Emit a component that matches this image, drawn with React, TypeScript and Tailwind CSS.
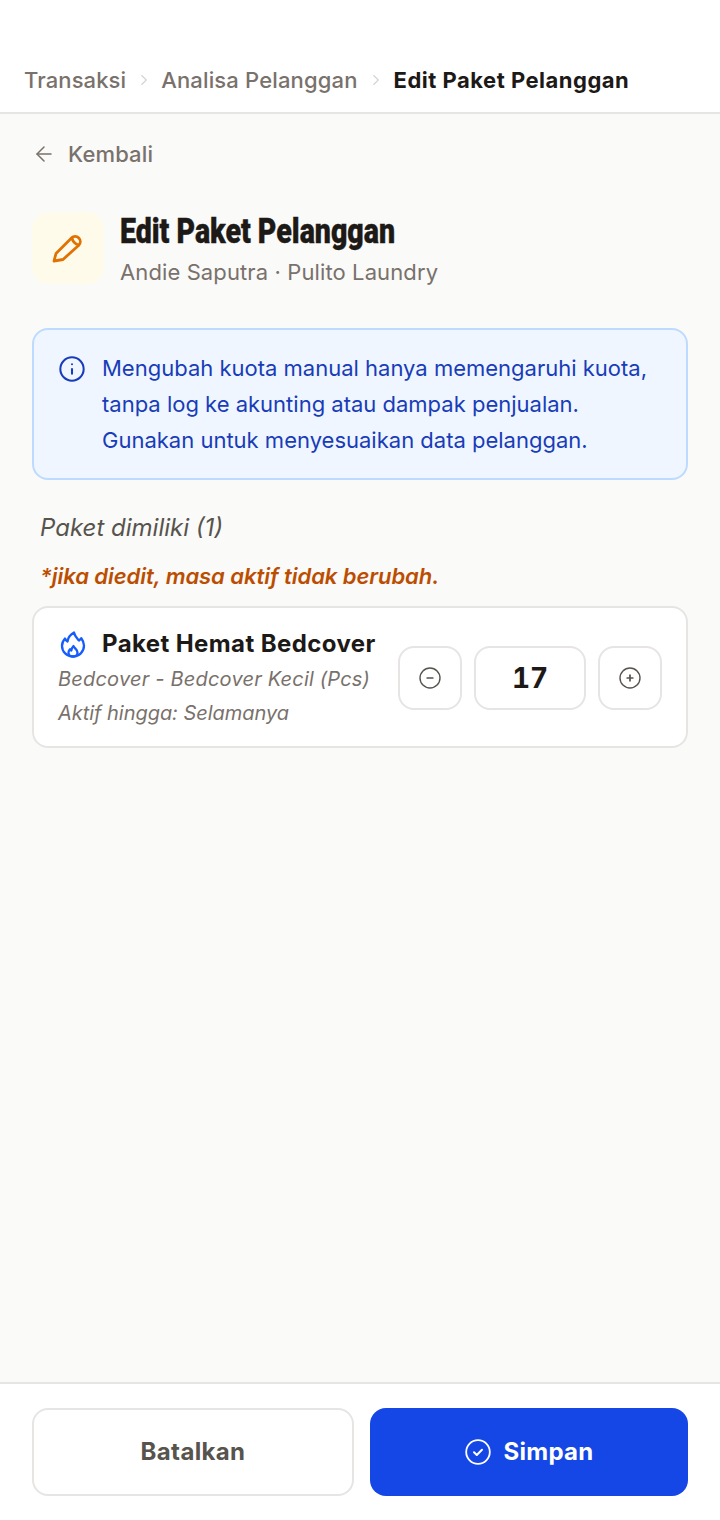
import React from "react";
import { ArrowLeft, ChevronRight, Info } from "lucide-react";

function Flame() {
  return (
    <svg width="30" height="30" viewBox="1 1 30 30" fill="none" stroke="#155dfc" strokeWidth="2.300" strokeLinecap="round" strokeLinejoin="round">
      <path d="M17 4.500C17.500 8 20 10 22 12.500C23 11.800 23.800 11 24.300 10.200C26 12.500 27 15 27 17.500C27 23.800 22.200 28.500 16 28.500C9.800 28.500 5 23.800 5 18C5 15 6.200 12.500 8 10.500C8.500 11.800 9.300 12.800 10.500 13.500C11 9.500 13.500 6.500 17 4.500Z" />
      <path d="M16.500 18C17 20 20.500 21.500 20.500 24.500C20.500 26.800 18.500 28.500 16 28.500C13.500 28.500 11.500 26.800 11.500 24.500C11.500 23 12.200 22 13 21.200C13.300 21.800 13.800 22.200 14.300 22.500C14.500 21 15.300 19.300 16.500 18Z" />
    </svg>
  );
}

function PencilIcon() {
  return (
    <svg width="48" height="48" viewBox="0 0 48 48" fill="none" stroke="#e17100" strokeWidth="2.800" strokeLinecap="round" strokeLinejoin="round">
      <path d="M10 37L12 29.500L27.500 14C29.500 12 32.800 12 34.800 14C36.800 16 36.800 19.200 34.800 21.200L19 35.500L10 37Z" />
      <path d="M28 14C28.500 17 31 19.800 34.500 21" />
    </svg>
  );
}

function Circle({ kind }: { kind: "minus" | "plus" }) {
  return (
    <svg width="24" height="24" viewBox="0 0 24 24" fill="none" stroke="#57534d" strokeLinecap="round">
      <circle cx="12" cy="12" r="10" strokeWidth="1.400" />
      <path d="M9.200 12h5.600" strokeWidth="1.700" />
      {kind === "plus" && <path d="M12 9.200v5.600" strokeWidth="1.700" />}
    </svg>
  );
}

export default function App() {
  return (
    <div className="flex h-[1520px] w-[720px] flex-col overflow-hidden bg-stone-50 font-['Inter',sans-serif] text-stone-900">
      <header className="flex h-[114px] items-end border-b-2 border-stone-200 bg-white px-6 pb-[17px]">
        <nav className="flex items-center text-[22px] leading-[30px]">
          <span className="font-medium tracking-[0.1px] text-stone-500">Transaksi</span>
          <ChevronRight className="ml-[9px] mr-2 h-[18px] w-[18px] text-stone-300" strokeWidth={1.5} />
          <span className="font-medium tracking-[0.15px] text-stone-500">Analisa Pelanggan</span>
          <ChevronRight className="mx-[9px] h-[18px] w-[18px] text-stone-300" strokeWidth={1.5} />
          <span className="font-bold tracking-[0.5px] text-stone-900">Edit Paket Pelanggan</span>
        </nav>
      </header>

      <main className="flex flex-1 flex-col px-8">
        <div className="mt-[26px] flex h-7 items-center gap-3 text-[22px] font-medium tracking-[0.14px] text-stone-500">
          <ArrowLeft className="h-6 w-6" strokeWidth={1.5} />
          <span>Kembali</span>
        </div>

        <div className="mt-[43px] flex items-start gap-4">
          <div className="mt-px flex h-[72px] w-[72px] items-center justify-center rounded-2xl bg-amber-50">
            <PencilIcon />
          </div>
          <div className="mt-[3px]">
            <h1 className="h-9 origin-left scale-x-[0.815] whitespace-nowrap font-['Roboto',sans-serif] text-[35px] font-black leading-9 text-stone-900 [-webkit-text-stroke:0.4px_#1c1917]">Edit Paket Pelanggan</h1>
            <p className="mt-[6px] text-[22px] leading-8 tracking-[0.11px] text-stone-500">Andie Saputra · Pulito Laundry</p>
          </div>
        </div>

        <div className="mt-10 flex h-[152px] gap-4 rounded-2xl border-2 border-blue-200 bg-blue-50 py-5 pl-6">
          <Info className="mt-[5px] h-7 w-7 shrink-0 text-blue-800" strokeWidth={1.75} />
          <p className="whitespace-nowrap text-[22px] leading-9 text-blue-800">
            Mengubah kuota manual hanya memengaruhi kuota,<br />
            tanpa log ke akunting atau dampak penjualan.<br />
            Gunakan untuk menyesuaikan data pelanggan.
          </p>
        </div>

        <p className="mt-[30px] pl-2 text-2xl italic leading-9 text-stone-600">Paket dimiliki (1)</p>
        <p className="mt-[14px] pl-2 text-[22px] font-semibold italic leading-8 tracking-[-0.06px] text-amber-700">*jika diedit, masa aktif tidak berubah.</p>

        <div className="mt-[14px] flex h-[142px] items-center justify-between rounded-2xl border-2 border-stone-200 bg-white px-6">
          <div className="pt-[3px]">
            <div className="flex items-center gap-[14px]">
              <Flame />
              <span className="whitespace-nowrap text-2xl font-bold leading-8 tracking-[0.4px]">Paket Hemat Bedcover</span>
            </div>
            <p className="mt-[3px] whitespace-nowrap text-[20px] italic leading-8 tracking-[0.2px] text-stone-500">Bedcover - Bedcover Kecil (Pcs)</p>
            <p className="mt-[2px] whitespace-nowrap text-[20px] italic leading-8 tracking-[-0.04px] text-stone-500">Aktif hingga: Selamanya</p>
          </div>
          <div className="flex translate-y-px items-center gap-3">
            <button className="flex h-16 w-16 items-center justify-center rounded-2xl border-2 border-stone-200 bg-white"><Circle kind="minus" /></button>
            <div className="flex h-16 w-28 items-center justify-center rounded-2xl border-2 border-stone-200 bg-white text-[28px] font-bold tabular-nums">17</div>
            <button className="flex h-16 w-16 items-center justify-center rounded-2xl border-2 border-stone-200 bg-white"><Circle kind="plus" /></button>
          </div>
        </div>
      </main>

      <footer className="flex h-[138px] gap-4 border-t-2 border-stone-200 bg-white px-8 pt-6">
        <button className="h-[88px] w-[322px] rounded-2xl border-2 border-stone-200 bg-white text-2xl font-bold tracking-[0.35px] text-stone-600">Batalkan</button>
        <button className="flex h-[88px] w-[318px] items-center justify-center gap-[13px] rounded-2xl bg-blue-700 text-2xl font-bold tracking-[0.25px] text-white">
          <svg width="26" height="26" viewBox="0 0 26 26" fill="none" stroke="white" strokeLinecap="round" strokeLinejoin="round">
            <circle cx="13" cy="13" r="11.800" strokeWidth="1.800" />
            <path d="M9 13.300l2.800 2.700 5.200-5.200" strokeWidth="2" />
          </svg>
          Simpan
        </button>
      </footer>
    </div>
  );
}
